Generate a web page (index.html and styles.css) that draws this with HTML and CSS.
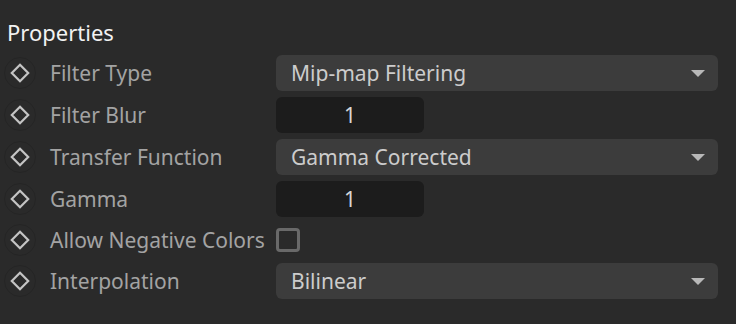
FILE: index.html
```html
<!DOCTYPE html>
<html lang="en">
<head>
    <meta charset="UTF-8">
    <title>Properties</title>
    <link rel="stylesheet" href="styles.css">
</head>
<body>
    <section class="panel">
        <h2 class="panel-title">Properties</h2>

        <div class="prop-row">
            <span class="keyframe"><svg width="20" height="20" viewBox="0 0 20 20"><path d="M10 1.8 L18.2 10 L10 18.2 L1.8 10 Z"/></svg></span>
            <span class="prop-label">Filter Type</span>
            <div class="dropdown"><span>Mip-map Filtering</span><i class="arrow"></i></div>
        </div>

        <div class="prop-row">
            <span class="keyframe"><svg width="20" height="20" viewBox="0 0 20 20"><path d="M10 1.8 L18.2 10 L10 18.2 L1.8 10 Z"/></svg></span>
            <span class="prop-label">Filter Blur</span>
            <div class="number-field">1</div>
        </div>

        <div class="prop-row">
            <span class="keyframe"><svg width="20" height="20" viewBox="0 0 20 20"><path d="M10 1.8 L18.2 10 L10 18.2 L1.8 10 Z"/></svg></span>
            <span class="prop-label">Transfer Function</span>
            <div class="dropdown"><span>Gamma Corrected</span><i class="arrow"></i></div>
        </div>

        <div class="prop-row">
            <span class="keyframe"><svg width="20" height="20" viewBox="0 0 20 20"><path d="M10 1.8 L18.2 10 L10 18.2 L1.8 10 Z"/></svg></span>
            <span class="prop-label">Gamma</span>
            <div class="number-field">1</div>
        </div>

        <div class="prop-row short">
            <span class="keyframe"><svg width="20" height="20" viewBox="0 0 20 20"><path d="M10 1.8 L18.2 10 L10 18.2 L1.8 10 Z"/></svg></span>
            <span class="prop-label">Allow Negative Colors</span>
            <span class="checkbox"></span>
        </div>

        <div class="prop-row">
            <span class="keyframe"><svg width="20" height="20" viewBox="0 0 20 20"><path d="M10 1.8 L18.2 10 L10 18.2 L1.8 10 Z"/></svg></span>
            <span class="prop-label">Interpolation</span>
            <div class="dropdown"><span>Bilinear</span><i class="arrow"></i></div>
        </div>
    </section>
</body>
</html>
```

FILE: styles.css
```css
* {
    margin: 0;
    padding: 0;
    box-sizing: border-box;
}

body {
    background: #2a2a2a;
    font-family: 'Segoe UI', 'Noto Sans', 'Open Sans', sans-serif;
}

.panel {
    padding: 16px 18px 0 4px;
}

.panel-title {
    font-size: 22px;
    font-weight: 400;
    line-height: 32px;
    color: #f2f2f2;
    padding-left: 3px;
    margin-bottom: 7px;
}

/* one property per row */
.prop-row {
    display: flex;
    align-items: center;
    height: 36px;
    margin-bottom: 6px;
}

.prop-row.short {
    height: 34px;
}

.keyframe {
    width: 32px;
    height: 32px;
    border-radius: 50%;
    border: 1px solid #252525;
    display: flex;
    justify-content: center;
    align-items: center;
    flex-shrink: 0;
}

.keyframe svg path {
    fill: none;
    stroke: #c4c4c4;
    stroke-width: 2.2;
}

.prop-label {
    width: 240px;
    padding-left: 14px;
    font-size: 21px;
    color: #a3a3a3;
    white-space: nowrap;
}

.dropdown {
    flex: 1;
    height: 36px;
    background: #3c3c3c;
    border-radius: 6px;
    display: flex;
    align-items: center;
    justify-content: space-between;
    padding: 0 13px 0 15px;
    font-size: 21px;
    color: #cccccc;
}

.arrow {
    width: 0;
    height: 0;
    border-left: 7px solid transparent;
    border-right: 7px solid transparent;
    border-top: 7px solid #b8b8b8;
}

.number-field {
    width: 148px;
    height: 36px;
    background: #1c1c1c;
    border-radius: 6px;
    display: flex;
    align-items: center;
    justify-content: center;
    font-size: 21px;
    color: #d6d6d6;
}

.checkbox {
    width: 24px;
    height: 24px;
    border: 3px solid #696969;
    border-radius: 4px;
}
```
